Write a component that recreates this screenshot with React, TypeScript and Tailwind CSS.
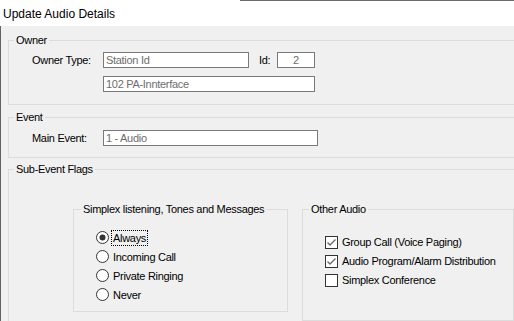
import React from "react";

const font = { fontFamily: '"Liberation Sans", Arial, sans-serif' };

function Radio({ checked }: { checked?: boolean }) {
  return (
    <svg width="13" height="13" viewBox="0 0 13 13" className="shrink-0">
      <circle cx="6.5" cy="6.5" r="6" fill="#fff" stroke="#333" strokeWidth="1" />
      {checked && <circle cx="6.5" cy="6.5" r="3" fill="#333" />}
    </svg>
  );
}

function Check({ checked }: { checked?: boolean }) {
  return (
    <svg width="13" height="13" viewBox="0 0 13 13" className="shrink-0">
      <rect x="0.5" y="0.5" width="12" height="12" fill="#fff" stroke="#333" strokeWidth="1" />
      {checked && (
        <polyline points="2.5,6.5 5,9 10.5,3.5" fill="none" stroke="#6a6a6a" strokeWidth="1.4" />
      )}
    </svg>
  );
}

function Field({ value, className, center }: { value: string; className: string; center?: boolean }) {
  return (
    <div
      className={`h-[16px] border border-[#7a7a7a] bg-white text-[#6d6d6d] leading-[14px] px-[2px] ${center ? "text-center" : ""} ${className}`}
    >
      {value}
    </div>
  );
}

export default function App() {
  return (
    <div
      className="w-[514px] h-[321px] overflow-hidden bg-[#f0f0f0] flex flex-col text-[11px] tracking-[-0.3px] text-black"
      style={font}
    >
      <div className="flex h-px shrink-0">
        <div className="w-[240px] bg-white" />
        <div className="flex-1 bg-[#6b6b6b]" />
      </div>
      <div className="h-[25px] shrink-0 bg-white flex items-center pl-[3px] text-[12px] tracking-normal text-black">
        Update Audio Details
      </div>
      <div className="flex-1 border-l border-[#646464] pl-[7px] pt-[7px] flex flex-col items-start">
        {/* Owner */}
        <fieldset className="w-[530px] border border-[#dcdcdc] m-0 p-0 min-w-0">
          <legend className="ml-[5px] px-[2px] leading-[14px]">Owner</legend>
          <div className="pl-[23px] pt-[5px] pb-[12px] flex flex-col gap-[8px]">
            <div className="flex items-center h-[16px]">
              <span className="w-[71px]">Owner Type:</span>
              <Field value="Station Id" className="w-[146px]" />
              <span className="ml-[10px] w-[18px]">Id:</span>
              <Field value="2" className="w-[38px]" center />
            </div>
            <div className="flex items-center h-[16px]">
              <span className="w-[71px]" />
              <Field value="102 PA-Innterface" className="w-[212px]" />
            </div>
          </div>
        </fieldset>

        {/* Event */}
        <fieldset className="mt-[5px] w-[530px] border border-[#dcdcdc] m-0 p-0 min-w-0">
          <legend className="ml-[5px] px-[2px] leading-[14px]">Event</legend>
          <div className="pl-[23px] pt-[6px] pb-[11px]">
            <div className="flex items-center h-[16px]">
              <span className="w-[71px]">Main Event:</span>
              <Field value="1 - Audio" className="w-[215px]" />
            </div>
          </div>
        </fieldset>

        {/* Sub-Event Flags */}
        <fieldset className="mt-[4px] w-[530px] h-[200px] border border-[#dcdcdc] m-0 p-0 min-w-0">
          <legend className="ml-[5px] px-[2px] leading-[14px]">Sub-Event Flags</legend>
          <div className="pl-[64px] pt-[26px] flex items-start">
            <fieldset className="w-[215px] h-[110px] border border-[#dcdcdc] m-0 p-0 min-w-0">
              <legend className="ml-[7px] px-[2px] leading-[14px]">
                Simplex listening, Tones and Messages
              </legend>
              <div className="pl-[22px] pt-[12px] flex flex-col">
                {[
                  { t: "Always", c: true },
                  { t: "Incoming Call" },
                  { t: "Private Ringing" },
                  { t: "Never" },
                ].map((r) => (
                  <div key={r.t} className="h-[19px] flex items-center">
                    <Radio checked={r.c} />
                    <span
                      className={`ml-[2px] px-[1px] leading-[14px] border ${
                        r.c ? "border-dotted border-black" : "border-transparent"
                      }`}
                    >
                      {r.t}
                    </span>
                  </div>
                ))}
              </div>
            </fieldset>
            <fieldset className="ml-[14px] w-[212px] h-[119px] border border-[#dcdcdc] m-0 p-0 min-w-0">
              <legend className="ml-[6px] px-[2px] leading-[14px]">Other Audio</legend>
              <div className="pl-[22px] pt-[17px] flex flex-col">
                {[
                  { t: "Group Call (Voice Paging)", c: true },
                  { t: "Audio Program/Alarm Distribution", c: true },
                  { t: "Simplex Conference" },
                ].map((r) => (
                  <div key={r.t} className="h-[19px] flex items-center">
                    <Check checked={r.c} />
                    <span className="ml-[4px]">{r.t}</span>
                  </div>
                ))}
              </div>
            </fieldset>
          </div>
        </fieldset>
      </div>
    </div>
  );
}
